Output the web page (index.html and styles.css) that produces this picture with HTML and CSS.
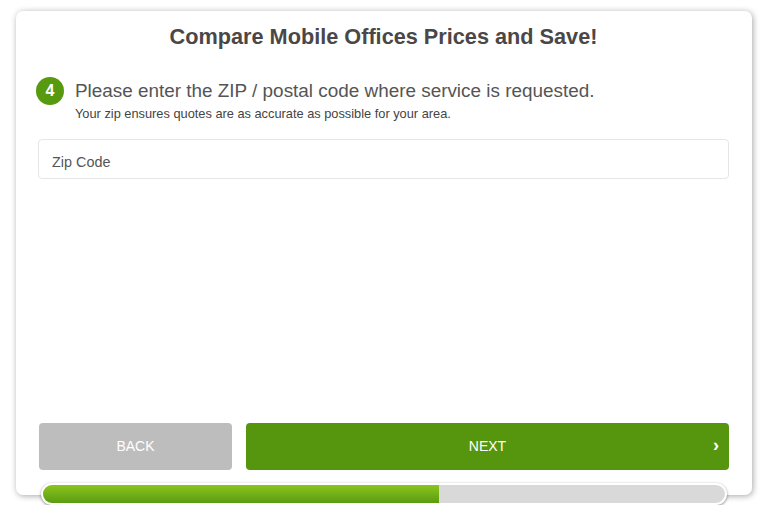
FILE: index.html
```html
<!DOCTYPE html>
<html>
<head>
  <title>Compare Mobile Offices Prices</title>
  <meta name="viewport" content="width=device-width, initial-scale=1.0">
  <link rel="stylesheet" href="styles.css">
</head>
<body>
  <div class="wrap">
    <div class="card">
      <h1 class="title">Compare Mobile Offices Prices and Save!</h1>

      <div class="step">
        <span class="step-num">4</span>
        <div class="step-text">
          <div class="question">Please enter the ZIP / postal code where service is requested.</div>
          <div class="hint">Your zip ensures quotes are as accurate as possible for your area.</div>
        </div>
      </div>

      <input type="text" class="zip" placeholder="Zip Code">

      <div class="buttons">
        <button class="btn back">BACK</button>
        <button class="btn next">NEXT <span class="chev">&#8250;</span></button>
      </div>
    </div>

    <div class="progress">
      <div class="progress-fill" style="width: 58%"></div>
    </div>
  </div>
</body>
</html>
```

FILE: styles.css
```css
body {
  margin: 0;
  padding: 0;
  background: #fff;
  font-family: "Liberation Sans", Arial, sans-serif;
}

.wrap {
  width: 736px;
  margin: 11px 0 0 16px;
}

.card {
  height: 484px;
  box-sizing: border-box;
  padding: 13px 23px 0 22px;
  background: #fff;
  border-radius: 7px;
  box-shadow: 1px 1px 6px rgba(0, 0, 0, 0.35);
  display: flex;
  flex-direction: column;
}

.title {
  margin: 0;
  font-size: 21.7px;
  line-height: 26px;
  font-weight: bold;
  color: #4b4747;
  text-align: center;
}

.step {
  display: flex;
  align-items: flex-start;
  margin-top: 27px;
  margin-left: -2px;
}

.step-num {
  flex: none;
  width: 28px;
  height: 28px;
  border-radius: 50%;
  background: #589a0f;
  color: #fff;
  font-weight: bold;
  font-size: 16px;
  line-height: 28px;
  text-align: center;
}

.step-text {
  margin-left: 11px;
}

.question {
  font-size: 18.9px;
  line-height: 24px;
  margin-top: 2px;
  color: #555;
}

.hint {
  font-size: 12.8px;
  line-height: 14px;
  margin-top: 4px;
  color: #444;
}

.zip {
  margin-top: 18px;
  height: 40px;
  box-sizing: border-box;
  width: 100%;
  padding: 5px 13px 0;
  border: 1px solid #e6e6e6;
  border-radius: 4px;
  font-family: inherit;
  font-size: 14.4px;
  color: #555;
  outline: none;
}

.zip::placeholder {
  color: #555;
}

.buttons {
  display: flex;
  gap: 14px;
  margin-top: auto;
  margin-bottom: 25px;
  padding-left: 1px;
}

.btn {
  height: 47px;
  border: none;
  border-radius: 4px;
  color: #fff;
  font-family: inherit;
  font-size: 14px;
  padding: 0 0 2px;
  cursor: pointer;
}

.back {
  width: 193px;
  background: #bdbdbd;
}

.next {
  flex: 1;
  position: relative;
  background: #56960e;
}

.chev {
  position: absolute;
  right: 10px;
  top: 12px;
  font-size: 18px;
  font-weight: bold;
}

.progress {
  position: relative;
  z-index: 1;
  margin: -12px 25px 0 25px;
  height: 18px;
  border: 2px solid #fff;
  border-radius: 11px;
  background: #d9d9d9;
  box-shadow: 0 1px 3px rgba(0, 0, 0, 0.45);
  overflow: hidden;
}

.progress-fill {
  height: 100%;
  background: linear-gradient(to bottom, #8cc51e, #5a9c10);
}
```
